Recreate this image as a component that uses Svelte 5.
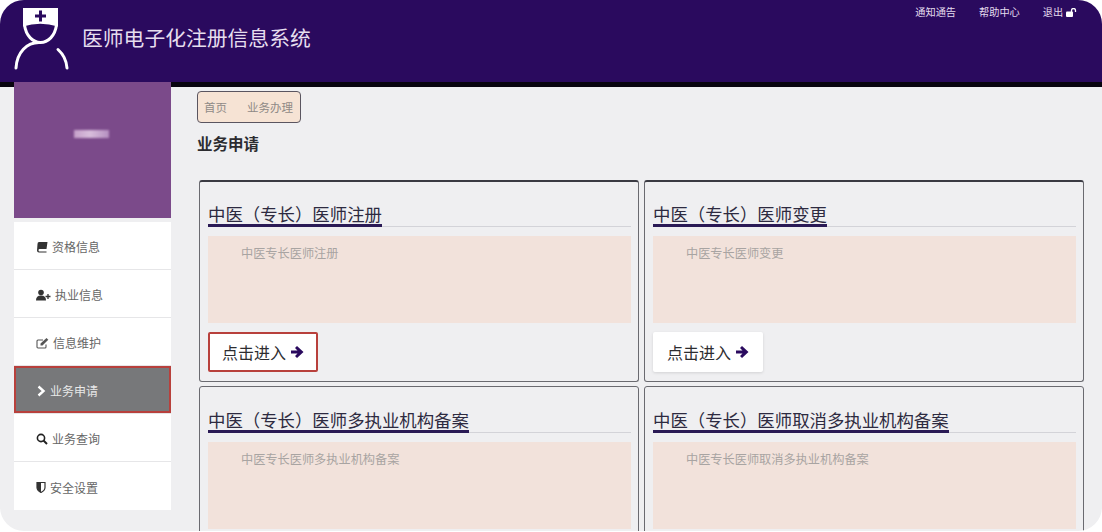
<script>
    const cards = [
        { title: "中医（专长）医师注册", desc: "中医专长医师注册", active: true },
        { title: "中医（专长）医师变更", desc: "中医专长医师变更" },
        { title: "中医（专长）医师多执业机构备案", desc: "中医专长医师多执业机构备案" },
        { title: "中医（专长）医师取消多执业机构备案", desc: "中医专长医师取消多执业机构备案" },
    ];

    // w: icon width, the icons are not all equally wide so the labels don't line up
    const menu = [
        { label: "资格信息", icon: "book", w: 12 },
        { label: "执业信息", icon: "user", w: 15 },
        { label: "信息维护", icon: "edit", w: 13 },
        { label: "业务申请", icon: "chevron", w: 10, active: true },
        { label: "业务查询", icon: "search", w: 12 },
        { label: "安全设置", icon: "shield", w: 10 },
    ];
</script>

<div class="shell">
    <header class="topbar">
        <div class="brand">
            <svg class="logo" width="80" height="82" viewBox="0 0 80 82">
                <path d="M23 8H58V26.500Q40 21 23 26.500Z" fill="#fff" />
                <path d="M35 16H46M40.500 10.500V21.500" stroke="#2a0a5e" stroke-width="3" />
                <path d="M24.500 25C26 36 33 42.500 40.500 42.500C48 42.500 55 36 56.500 25" fill="none" stroke="#fff" stroke-width="3" />
                <path d="M39 42.500C27 42.500 17 52 16 68" fill="none" stroke="#fff" stroke-width="3" stroke-linecap="round" />
                <path d="M58 49.500C63 54 66.500 61 67 68" fill="none" stroke="#fff" stroke-width="3" stroke-linecap="round" />
            </svg>
            <h1>医师电子化注册信息系统</h1>
        </div>
        <nav class="toplinks">
            <span>通知通告</span>
            <span>帮助中心</span>
            <span class="logout">退出
                <svg width="11" height="9" viewBox="0 0 11 9">
                    <rect x="0" y="3.500" width="7" height="5.500" rx="1" fill="#fff" />
                    <path d="M5.500 4V2.500a2 2 0 0 1 4 0V4" fill="none" stroke="#fff" stroke-width="1.300" />
                </svg>
            </span>
        </nav>
    </header>

    <div class="body">
        <aside class="sidebar">
            <div class="profile"><span class="blurname"></span></div>
            <ul class="menu">
                {#each menu as item}
                    <li class:active={item.active}>
                        <svg width={item.w} height="12" viewBox="0 0 {item.w} 12">
                            {#if item.icon === "book"}
                                <path d="M3 1h8.500L10.500 8H3.500Q2.500 8 2.500 9.200t1 1.300H10.500V11.500H3Q1 11.500 1 9.500L1.500 3q0-2 1.500-2z" fill="#333" />
                            {:else if item.icon === "user"}
                                <circle cx="5" cy="3.500" r="2.800" fill="#333" />
                                <path d="M0 11.500q0-5 5-5t5 5z" fill="#333" />
                                <path d="M9.500 7.500h5M12 5v5" stroke="#333" stroke-width="1.300" />
                            {:else if item.icon === "edit"}
                                <path d="M10 7.500V10a1 1 0 0 1-1 1H2a1 1 0 0 1-1-1V4a1 1 0 0 1 1-1h5" fill="none" stroke="#555" stroke-width="1.100" />
                                <path d="M4.500 6.500l6-5.500 1.800 1.800-5.800 5.700H4.500z" fill="#555" />
                            {:else if item.icon === "chevron"}
                                <path d="M2.500 1.500L7.500 6l-5 4.500" fill="none" stroke="#fff" stroke-width="2.400" />
                            {:else if item.icon === "search"}
                                <circle cx="5" cy="5" r="3.600" fill="none" stroke="#222" stroke-width="1.600" />
                                <path d="M7.500 7.500L11 11" stroke="#222" stroke-width="1.900" />
                            {:else}
                                <path d="M1 1.500h8v5q0 3-4 5-4-2-4-5z" fill="none" stroke="#333" stroke-width="1.200" />
                                <path d="M5 1.500H1v5q0 3 4 5z" fill="#333" />
                            {/if}
                        </svg>
                        <span>{item.label}</span>
                    </li>
                {/each}
            </ul>
        </aside>

        <main class="content">
            <div class="crumb"><span>首页</span><span>业务办理</span></div>
            <h2>业务申请</h2>
            <div class="grid">
                {#each cards as card, i}
                    <section class="card" class:first={i < 2}>
                        <div class="cardtitle"><span>{card.title}</span></div>
                        <div class="desc"><p>{card.desc}</p></div>
                        <button class:active={card.active}>
                            点击进入
                            <svg width="15" height="14" viewBox="0 0 15 14">
                                <path d="M1 5.500h6.500L5 3l2-2 6.500 6-6.500 6-2-2 2.500-2.500H1z" fill="#2a0a5e" />
                            </svg>
                        </button>
                    </section>
                {/each}
            </div>
        </main>
    </div>
</div>

<style>
    :global(body) {
        margin: 0;
        background: #fff;
        overflow: hidden;
    }

    .shell {
        width: 1102px;
        height: 531px;
        border-radius: 24px;
        overflow: hidden;
        background: #efeff1;
        font-family: "Liberation Sans", "Noto Sans CJK SC", sans-serif;
    }

    .topbar {
        height: 82px;
        background: #2a0a5e;
        border-bottom: 5px solid #08040f;
        display: flex;
        justify-content: space-between;
    }

    .brand {
        display: flex;
        align-items: flex-start;
    }

    .logo {
        display: block;
    }

    h1 {
        margin: 26px 0 0 2px;
        font-size: 20.800px;
        line-height: 26px;
        font-weight: 400;
        color: #e6deee;
    }

    .toplinks {
        display: flex;
        gap: 23px;
        padding: 6px 25px 0 0;
        font-size: 10.200px;
        line-height: 14px;
        color: #e4dcee;
    }

    .logout svg {
        vertical-align: -1px;
    }

    .body {
        display: flex;
        margin-top: -5px;
        padding-left: 14px;
    }

    .sidebar {
        width: 157px;
        flex: none;
        position: relative;
        z-index: 1;
    }

    .profile {
        height: 136px;
        box-sizing: border-box;
        padding-top: 48px;
        background: #7b4a8a;
        display: flex;
        justify-content: center;
    }

    .blurname {
        width: 35px;
        height: 8px;
        margin-left: -2px;
        background: linear-gradient(90deg, #c49fc9, #d8bfdc 45%, #b58fc0);
        filter: blur(1px);
    }

    .menu {
        list-style: none;
        margin: 4px 0 0;
        padding: 0;
        background: #fff;
        font-size: 12px;
        color: #666;
    }

    .menu li {
        box-sizing: border-box;
        height: 48px;
        padding: 2px 0 0 22px;
        border-bottom: 1px solid #e6e6e8;
        display: flex;
        align-items: center;
        gap: 4px;
    }

    .menu li:last-child {
        border-bottom: none;
    }

    .menu li.active {
        background: #77787a;
        color: #e8e8e8;
        box-shadow: inset 0 0 0 2px #b8403c;
    }

    .content {
        flex: 1;
        min-width: 0;
        padding: 9px 0 0 26px;
    }

    .crumb {
        width: 104px;
        height: 32px;
        box-sizing: border-box;
        border: 1px solid #5a5560;
        border-radius: 4px;
        background: #f6e3d4;
        display: flex;
        align-items: center;
        gap: 20px;
        padding-left: 6px;
        font-size: 11.500px;
        color: #8f8a86;
    }

    h2 {
        margin: 12px 0 0;
        font-size: 15.500px;
        line-height: 20px;
        font-weight: 700;
        color: #2c2c30;
    }

    .grid {
        display: grid;
        grid-template-columns: 440px 440px;
        gap: 4px 5px;
        margin: 25px 0 0 2px;
    }

    .card {
        box-sizing: border-box;
        height: 202px;
        border: 1px solid #6a6a70;
        border-radius: 3px;
        padding: 0 7px 0 8px;
    }

    .card.first {
        border-top: 2px solid #3a3a42;
    }

    .cardtitle {
        margin-top: 23px;
        border-bottom: 1px solid #d3d3d8;
        height: 22px;
    }

    .card.first .cardtitle {
        margin-top: 22px;
    }

    .cardtitle span {
        display: inline-block;
        height: 20px;
        border-bottom: 3px solid #2a1a55;
        font-size: 17.400px;
        line-height: 22px;
        color: #2d2a40;
    }

    .desc {
        height: 87px;
        margin-top: 9px;
        background: #f2e2db;
    }

    .desc p {
        margin: 0;
        padding: 11px 0 0 33px;
        font-size: 12.200px;
        line-height: 15px;
        color: #a8a4a2;
    }

    button {
        display: flex;
        align-items: center;
        gap: 4px;
        box-sizing: border-box;
        width: 110px;
        height: 40px;
        margin-top: 9px;
        padding: 0 0 0 14px;
        border: none;
        border-radius: 2px;
        background: #fff;
        box-shadow: 0 1px 3px rgba(0, 0, 0, 0.12);
        font: inherit;
        font-size: 16px;
        color: #2d2d30;
    }

    button.active {
        box-shadow: inset 0 0 0 2px #b8403c;
    }
</style>
